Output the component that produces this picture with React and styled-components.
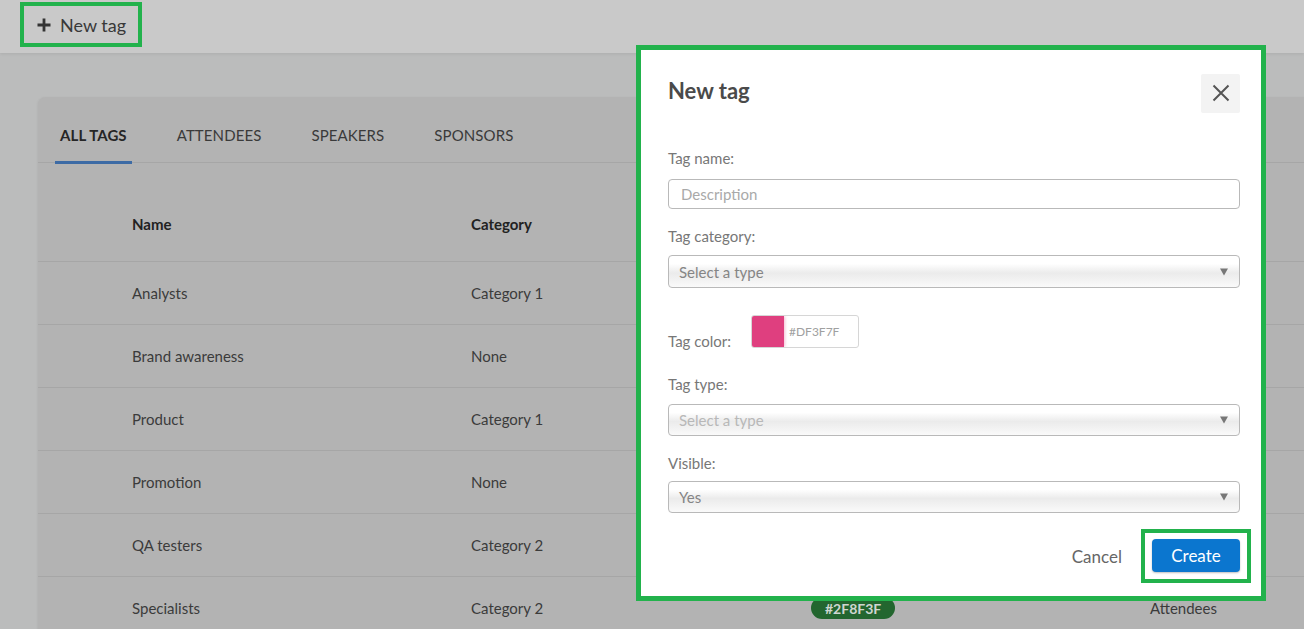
import React from "react";
import styled, { createGlobalStyle } from "styled-components";

const GREEN = "#22b24c";

const GlobalStyle = createGlobalStyle`
  html, body { margin: 0; padding: 0; }
  body {
    font-family: Lato, "Open Sans", "Liberation Sans", sans-serif;
    background: #bbbcbc;
    overflow: hidden;
  }
  * { box-sizing: border-box; }
`;

const Page = styled.div`
  position: relative;
  width: 1304px;
  height: 629px;
  overflow: hidden;
  display: flex;
  flex-direction: column;
`;

const TopBar = styled.div`
  height: 53px;
  flex: none;
  background: #c9c9c9;
  box-shadow: 0 1px 3px rgba(0, 0, 0, 0.08);
  padding: 2px 0 0 20px;
  display: flex;
  align-items: flex-start;
`;

const NewTagButton = styled.button`
  width: 122px;
  height: 45px;
  border: 4px solid ${GREEN};
  background: transparent;
  padding: 0 0 0 13px;
  display: flex;
  align-items: center;
  gap: 9px;
  font-family: inherit;
  font-size: 18px;
  color: #383838;
  cursor: pointer;
`;

const Main = styled.div`
  flex: 1;
  padding: 44px 0 0 38px;
`;

const Card = styled.div`
  background: #b3b3b3;
  border-radius: 8px 0 0 0;
  margin-right: -20px;
  height: 100%;
  box-shadow: -1px 0 2px rgba(0, 0, 0, 0.04);
`;

const Tabs = styled.div`
  height: 66px;
  display: flex;
  gap: 40px;
  padding-left: 17px;
  border-bottom: 1px solid #a6a6a6;
`;

const Tab = styled.div`
  height: 67px;
  padding: 12px 5px 0;
  display: flex;
  align-items: center;
  font-size: 15px;
  font-weight: ${(p) => (p.$active ? 700 : 400)};
  color: ${(p) => (p.$active ? "#262626" : "#3a3a3a")};
  border-bottom: 3px solid ${(p) => (p.$active ? "#3d6ba5" : "transparent")};
  letter-spacing: 0.1px;
`;

const Row = styled.div`
  display: grid;
  grid-template-columns: 339px 340px 339px 1fr;
  padding-left: 94px;
  align-items: center;
  height: ${(p) => (p.$header ? "99px" : "63px")};
  padding-top: ${(p) => (p.$header ? "23px" : "0")};
  border-bottom: 1px solid #a6a6a6;
  font-size: 15px;
  color: ${(p) => (p.$header ? "#222" : "#3b3b3b")};
  font-weight: ${(p) => (p.$header ? 700 : 400)};
`;

const Badge = styled.span`
  justify-self: start;
  display: inline-flex;
  align-items: center;
  height: 22px;
  padding: 0 14px;
  border-radius: 11px;
  background: #23662f;
  color: #cfd6d0;
  font-weight: 700;
  font-size: 14px;
`;

const Modal = styled.div`
  position: absolute;
  left: 636px;
  top: 45px;
  width: 630px;
  height: 556px;
  border: 5px solid ${GREEN};
  background: #fff;
  padding: 24px 21px 0 27px;
  display: flex;
  flex-direction: column;
`;

const ModalHeader = styled.div`
  display: flex;
  justify-content: space-between;
  align-items: center;
  height: 38px;
`;

const Title = styled.h2`
  margin: -5px 0 0;
  font-size: 22px;
  font-weight: 700;
  color: #4a4a4a;
`;

const CloseButton = styled.button`
  width: 39px;
  height: 39px;
  border: none;
  border-radius: 2px;
  background: #f3f3f3;
  display: flex;
  align-items: center;
  justify-content: center;
  padding: 0;
  cursor: pointer;
`;

const Label = styled.label`
  display: block;
  font-size: 15px;
  line-height: 18px;
  color: #777;
  margin-top: ${(p) => p.$mt}px;
  margin-bottom: ${(p) => p.$mb}px;
`;

const TextInput = styled.input`
  width: 100%;
  height: 30px;
  border: 1px solid #b9b9b9;
  border-radius: 4px;
  padding: 0 12px;
  font-family: inherit;
  font-size: 15px;
  color: #555;
  outline: none;
  &::placeholder { color: #a9a9a9; }
`;

const Select = styled.div`
  position: relative;
  height: ${(p) => p.$h}px;
  border: 1px solid #b9b9b9;
  border-radius: 4px;
  padding: 0 30px 0 10px;
  display: flex;
  align-items: center;
  font-size: 15px;
  color: ${(p) => (p.$faded ? "#b8b8b8" : "#858585")};
  background: linear-gradient(to bottom, #ffffff 0%, #ffffff 25%, #ebebeb 55%, #f3f3f3 80%, #fafafa 100%);
`;

const Caret = styled.span`
  position: absolute;
  right: 11px;
  top: 50%;
  transform: translateY(-50%);
  width: 0;
  height: 0;
  border-left: 4px solid transparent;
  border-right: 4px solid transparent;
  border-top: 7px solid #777;
`;

const ColorRow = styled.div`
  display: flex;
  align-items: flex-end;
  gap: 20px;
  margin-top: 27px;
`;

const ColorPicker = styled.div`
  width: 108px;
  height: 33px;
  border: 1px solid #d6d6d6;
  border-radius: 3px;
  display: flex;
  align-items: center;
  overflow: hidden;
  margin-bottom: 2px;
  order: 2;
`;

const Swatch = styled.span`
  width: 32px;
  align-self: stretch;
  background: ${(p) => p.$color};
  box-shadow: 1px 0 3px rgba(223, 63, 127, 0.35);
`;

const HexText = styled.span`
  font-size: 12px;
  color: #a0a0a0;
  padding-left: 5px;
`;

const Footer = styled.div`
  display: flex;
  justify-content: flex-end;
  align-items: center;
  gap: 19px;
  margin-top: 16px;
  margin-right: -11px;
`;

const CancelButton = styled.button`
  border: none;
  background: none;
  padding: 0;
  font-family: inherit;
  font-size: 17px;
  color: #666;
  cursor: pointer;
`;

const Highlight = styled.div`
  border: 4px solid ${GREEN};
  padding: 6px 7px 7px;
`;

const PrimaryButton = styled.button`
  width: 88px;
  height: 33px;
  border: none;
  border-radius: 4px;
  background: #0b76cf;
  box-shadow: 0 1px 2px rgba(0, 0, 0, 0.25);
  color: #fff;
  font-family: inherit;
  font-size: 17px;
  cursor: pointer;
`;

const rows = [
  ["Analysts", "Category 1"],
  ["Brand awareness", "None"],
  ["Product", "Category 1"],
  ["Promotion", "None"],
  ["QA testers", "Category 2"],
  ["Specialists", "Category 2", "#2F8F3F", "Attendees"],
];

const PlusIcon = () => (
  <svg width="14" height="14" viewBox="0 0 14 14">
    <path d="M7 0.5v13M0.5 7h13" stroke="#333" strokeWidth="2.8" />
  </svg>
);

const CloseIcon = () => (
  <svg width="18" height="18" viewBox="0 0 18 18">
    <path d="M1.5 1.5l15 15M16.5 1.5l-15 15" stroke="#555" strokeWidth="2" />
  </svg>
);

export default function App() {
  return (
    <>
      <GlobalStyle />
      <Page>
        <TopBar>
          <NewTagButton>
            <PlusIcon />
            New tag
          </NewTagButton>
        </TopBar>
        <Main>
          <Card>
            <Tabs>
              <Tab $active>ALL TAGS</Tab>
              <Tab>ATTENDEES</Tab>
              <Tab>SPEAKERS</Tab>
              <Tab>SPONSORS</Tab>
            </Tabs>
            <Row $header>
              <span>Name</span>
              <span>Category</span>
              <span />
              <span />
            </Row>
            {rows.map(([name, cat, color, type]) => (
              <Row key={name}>
                <span>{name}</span>
                <span>{cat}</span>
                {color ? <Badge>{color}</Badge> : <span />}
                <span>{type || ""}</span>
              </Row>
            ))}
          </Card>
        </Main>

        <Modal>
          <ModalHeader>
            <Title>New tag</Title>
            <CloseButton aria-label="Close">
              <CloseIcon />
            </CloseButton>
          </ModalHeader>

          <Label $mt={37} $mb={12}>Tag name:</Label>
          <TextInput placeholder="Description" />

          <Label $mt={18} $mb={10}>Tag category:</Label>
          <Select $h={33}>
            Select a type
            <Caret />
          </Select>

          <ColorRow>
            <ColorPicker>
              <Swatch $color="#df3f7f" />
              <HexText>#DF3F7F</HexText>
            </ColorPicker>
            <Label $mt={0} $mb={0}>Tag color:</Label>
          </ColorRow>

          <Label $mt={25} $mb={11}>Tag type:</Label>
          <Select $h={32} $faded>
            Select a type
            <Caret />
          </Select>

          <Label $mt={18} $mb={9}>Visible:</Label>
          <Select $h={32}>
            Yes
            <Caret />
          </Select>

          <Footer>
            <CancelButton>Cancel</CancelButton>
            <Highlight>
              <PrimaryButton>Create</PrimaryButton>
            </Highlight>
          </Footer>
        </Modal>
      </Page>
    </>
  );
}
